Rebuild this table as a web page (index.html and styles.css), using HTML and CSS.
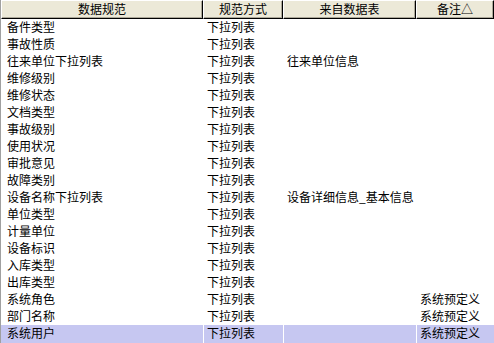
FILE: index.html
```html
<!DOCTYPE html>
<html lang="zh">
<head>
<meta charset="utf-8">
<link rel="stylesheet" href="styles.css">
</head>
<body>
<div class="grid">
  <div class="hd">数据规范</div><div class="hd">规范方式</div><div class="hd">来自数据表</div><div class="hd">备注△</div>
  <div class="c">备件类型</div><div class="c">下拉列表</div><div class="c"></div><div class="c"></div>
  <div class="c">事故性质</div><div class="c">下拉列表</div><div class="c"></div><div class="c"></div>
  <div class="c">往来单位下拉列表</div><div class="c">下拉列表</div><div class="c">往来单位信息</div><div class="c"></div>
  <div class="c">维修级别</div><div class="c">下拉列表</div><div class="c"></div><div class="c"></div>
  <div class="c">维修状态</div><div class="c">下拉列表</div><div class="c"></div><div class="c"></div>
  <div class="c">文档类型</div><div class="c">下拉列表</div><div class="c"></div><div class="c"></div>
  <div class="c">事故级别</div><div class="c">下拉列表</div><div class="c"></div><div class="c"></div>
  <div class="c">使用状况</div><div class="c">下拉列表</div><div class="c"></div><div class="c"></div>
  <div class="c">审批意见</div><div class="c">下拉列表</div><div class="c"></div><div class="c"></div>
  <div class="c">故障类别</div><div class="c">下拉列表</div><div class="c"></div><div class="c"></div>
  <div class="c">设备名称下拉列表</div><div class="c">下拉列表</div><div class="c">设备详细信息_基本信息</div><div class="c"></div>
  <div class="c">单位类型</div><div class="c">下拉列表</div><div class="c"></div><div class="c"></div>
  <div class="c">计量单位</div><div class="c">下拉列表</div><div class="c"></div><div class="c"></div>
  <div class="c">设备标识</div><div class="c">下拉列表</div><div class="c"></div><div class="c"></div>
  <div class="c">入库类型</div><div class="c">下拉列表</div><div class="c"></div><div class="c"></div>
  <div class="c">出库类型</div><div class="c">下拉列表</div><div class="c"></div><div class="c"></div>
  <div class="c">系统角色</div><div class="c">下拉列表</div><div class="c"></div><div class="c">系统预定义</div>
  <div class="c">部门名称</div><div class="c">下拉列表</div><div class="c"></div><div class="c">系统预定义</div>
  <div class="c sel first">系统用户</div><div class="c sel">下拉列表</div><div class="c sel"></div><div class="c sel">系统预定义</div>
</div>
</body>
</html>
```
FILE: styles.css
```css
html, body {
  margin: 0;
  padding: 0;
  background: #fff;
}
body {
  font-family: "Noto Sans CJK SC", "Liberation Sans", sans-serif;
  font-size: 12px;
  color: #000;
  overflow: hidden;
}
.grid {
  display: grid;
  grid-template-columns: 202px 80px 133px 78px;
  grid-template-rows: 19px repeat(18, 17px) 18px;
  width: 494px;
  height: 343px;
  box-sizing: border-box;
  border-left: 1px solid #a0a0a0;
}
.hd {
  background: #ece9d8;
  border-top: 1px solid #fff;
  border-left: 1px solid #fff;
  border-right: 1px solid #000;
  border-bottom: 1px solid #000;
  box-shadow: inset -1px -1px 0 #aca899;
  text-align: center;
  line-height: 16px;
  box-sizing: border-box;
  white-space: nowrap;
  overflow: hidden;
}
.c {
  padding-left: 4px;
  line-height: 15px;
  white-space: nowrap;
  overflow: hidden;
}
.c:nth-child(4n+1) {
  padding-left: 6px;
}
.sel {
  background: #c6c7f1;
  border-left: 1px solid #fff;
  padding-left: 3px;
  line-height: 16px;
}
.sel.first {
  border-left: none;
  padding-left: 6px;
}
```
